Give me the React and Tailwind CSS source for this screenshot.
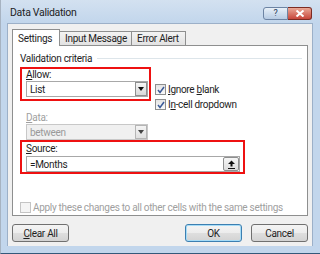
import { useState } from 'react';

const font = { fontFamily: 'Roboto, "Open Sans", "Noto Sans", sans-serif' };

function Check({ checked, disabled, label }) {
  return (
    <div className="flex items-center gap-[2px] h-[15px]">
      <span className={`w-[11px] h-[11px] border flex items-center justify-center shrink-0 ${disabled ? 'border-[#c4c4c4] bg-[#f4f4f4]' : 'border-[#8e8f8f] bg-[linear-gradient(#e4e4e4,#fafafa)]'}`}>
        {checked && (
          <svg width="8" height="8" viewBox="0 0 8 8">
            <path d="M1 4 L3 6.5 L7 1" fill="none" stroke="#3a5a98" strokeWidth="1.5" />
          </svg>
        )}
      </span>
      <span className={disabled ? 'text-[#a0a0a0]' : 'text-[#1e1e1e]'}>{label}</span>
    </div>
  );
}

function Select({ value, disabled }) {
  return (
    <div className={`w-[122px] h-[16px] border flex items-center shrink-0 ${disabled ? 'border-[#c8c8c8] bg-[#f0f0f0]' : 'border-[#a8a8a8] bg-white'}`}>
      <span className={`flex-1 pl-[3px] ${disabled ? 'text-[#9a9a9a]' : 'text-[#1e1e1e]'}`}>{value}</span>
      <span className={`w-[12px] h-[14px] border flex items-center justify-center ${disabled ? 'border-[#b5b5b5] bg-[linear-gradient(#f4f4f4,#e0e0e0)]' : 'border-[#8e8f8f] bg-[linear-gradient(#f6f6f6,#d8d8d8)]'}`}>
        <svg width="6" height="4" viewBox="0 0 6 4"><path d="M0 0 H6 L3 4 Z" fill={disabled ? '#444' : '#111'} /></svg>
      </span>
    </div>
  );
}

function Btn({ children, primary, w }) {
  return (
    <div className={`${w} h-[18px] rounded-[3px] border flex items-center justify-center text-[#1e1e1e] bg-[linear-gradient(#f4f4f4_0%,#ececec_50%,#dedede_51%,#d3d3d3_100%)] ${primary ? 'border-[#3c7fb1] shadow-[inset_0_0_0_1px_#a6dcf7]' : 'border-[#707070]'}`}>
      {children}
    </div>
  );
}

export default function App() {
  const [tab] = useState('Settings');
  const tabs = [['Settings', 'w-[48px]'], ['Input Message', 'w-[72px]'], ['Error Alert', 'w-[54px]']];
  return (
    <div style={font} className="w-[320px] h-[254px] bg-[#c2d6ec] border-l border-[#a7b3c1] border-b border-b-[#34597a] text-[10px] tracking-[-0.3px] flex flex-col overflow-hidden select-none">
      {/* title bar */}
      <div className="h-[23px] shrink-0 flex items-start bg-[linear-gradient(#d3e1f0,#c2d6ec)]">
        <span className="pl-[9px] pt-[5px] text-[10.5px] text-[#1e1e1e]">Data Validation</span>
        <div className="ml-auto mt-[7px] mr-[8px] flex">
          <div className="w-[25px] h-[13px] rounded-l-[3px] border border-[#6d84a3] bg-[linear-gradient(#e8f0f8,#b6cbe3)] flex items-center justify-center text-[9px] leading-none text-[#2a3e5a]">?</div>
          <div className="w-[24px] h-[13px] rounded-r-[3px] border border-[#7c2b22] border-l-0 bg-[linear-gradient(#eaa896,#c7463a)] flex items-center justify-center">
            <svg width="10" height="7" viewBox="0 0 10 7"><path d="M1.5 0.5 L8.5 6.5 M8.5 0.5 L1.5 6.5" stroke="#fff" strokeWidth="2" /></svg>
          </div>
        </div>
      </div>

      {/* client */}
      <div className="h-[223px] shrink-0 ml-[6px] mr-[7px] bg-[#f0f0f0] border border-[#9cb0c8] border-b-0 flex flex-col px-[4px] pt-[4px]">
        {/* tabs */}
        <div className="flex items-end h-[17px] shrink-0">
          {tabs.map(([t, w]) => (
            <div key={t} className={tab === t
              ? `${w} h-[17px] pl-[5px] bg-white border border-[#8e8f8f] border-b-0 relative z-10 text-[#1e1e1e] flex items-center -mb-[1px]`
              : `${w} h-[14px] pl-[5px] bg-[linear-gradient(#f3f3f3,#e2e2e2)] border border-[#8e8f8f] border-l-0 border-b-0 text-[#1e1e1e] flex items-center`}>
              {t}
            </div>
          ))}
        </div>

        {/* panel */}
        <div className="w-[296px] h-[171px] shrink-0 bg-white border border-[#8e8f8f] pl-[7px] pt-[5px] flex flex-col">
          <div className="h-[14px] flex items-center gap-[5px] text-[#1e1e1e] pr-[5px]">
            <span>Validation criteria</span>
            <span className="flex-1 h-px bg-[#dde5ea]" />
          </div>

          <div className="flex items-start mt-[2px]">
            <div className="w-[131px] h-[34px] border-2 border-[#ee1111] pl-[4px] flex flex-col">
              <span className="h-[12px] leading-[12px] text-[#1e1e1e]"><u>A</u>llow:</span>
              <Select value="List" />
            </div>
            <div className="ml-[4px] mt-[15px] flex flex-col">
              <Check checked label={<><u>I</u>gnore <u>b</u>lank</>} />
              <Check checked label={<>I<u>n</u>-cell dropdown</>} />
            </div>
          </div>

          <div className="flex flex-col pl-[6px]">
            <span className="h-[12px] leading-[12px] text-[#a0a0a0]"><u>D</u>ata:</span>
            <Select value="between" disabled />
          </div>

          <div className="w-[225px] h-[41px] border-2 border-[#ee1111] pl-[4px] flex flex-col">
            <span className="h-[14px] leading-[14px] text-[#1e1e1e]"><u>S</u>ource:</span>
            <div className="w-[214px] h-[16px] border border-[#a8a8a8] bg-white flex items-center">
              <span className="flex-1 pl-[3px] text-[#1e1e1e]">=Months</span>
              <span className="w-[16px] h-[14px] border border-[#8e8f8f] rounded-[2px] bg-[linear-gradient(#f6f6f6,#dcdcdc)] flex items-center justify-center">
                <svg width="9" height="9" viewBox="0 0 9 9"><path d="M4.5 0.5 L8 4 H5.5 V6.5 H3.5 V4 H1 Z" fill="#111" /><path d="M1 8.5 H8" stroke="#111" /></svg>
              </span>
            </div>
          </div>

          <div className="mt-[26px]">
            <Check disabled label="Apply these changes to all other cells with the same settings" />
          </div>
        </div>

        {/* buttons */}
        <div className="flex items-center mt-[8px]">
          <Btn w="w-[57px]"><span><u>C</u>lear All</span></Btn>
          <div className="ml-auto flex gap-[9px]">
            <Btn primary w="w-[57px]">OK</Btn>
            <Btn w="w-[57px]">Cancel</Btn>
          </div>
        </div>
      </div>
    </div>
  );
}
